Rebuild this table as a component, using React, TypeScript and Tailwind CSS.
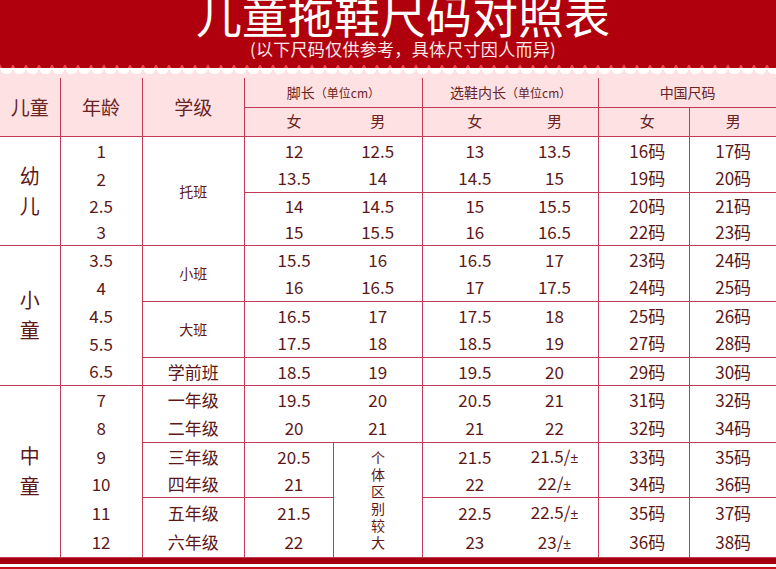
import React from "react"

const LINE = "border-[#c23a55]"

type Row = [string, string, string, string, string, string, string]

// age, 脚长女, 脚长男, 内长女, 内长男, 中国女, 中国男
const rows: Row[] = [
  ["1", "12", "12.5", "13", "13.5", "16码", "17码"],
  ["2", "13.5", "14", "14.5", "15", "19码", "20码"],
  ["2.5", "14", "14.5", "15", "15.5", "20码", "21码"],
  ["3", "15", "15.5", "16", "16.5", "22码", "23码"],
  ["3.5", "15.5", "16", "16.5", "17", "23码", "24码"],
  ["4", "16", "16.5", "17", "17.5", "24码", "25码"],
  ["4.5", "16.5", "17", "17.5", "18", "25码", "26码"],
  ["5.5", "17.5", "18", "18.5", "19", "27码", "28码"],
  ["6.5", "18.5", "19", "19.5", "20", "29码", "30码"],
  ["7", "19.5", "20", "20.5", "21", "31码", "32码"],
  ["8", "20", "21", "21", "22", "32码", "34码"],
  ["9", "20.5", "", "21.5", "21.5/", "33码", "35码"],
  ["10", "21", "", "22", "22/", "34码", "36码"],
  ["11", "21.5", "", "22.5", "22.5/", "35码", "37码"],
  ["12", "22", "", "23", "23/", "36码", "38码"],
]

const rowH = [
  "h-[28px]",
  "h-[28px]",
  "h-[27px]",
  "h-[26px]",
  "h-[28px]",
  "h-[28px]",
  "h-[28px]",
  "h-[28px]",
  "h-[28px]",
  "h-[28px]",
  "h-[29px]",
  "h-[28px]",
  "h-[27px]",
  "h-[30px]",
  "h-[30px]",
]

const groupEnds = [1, 3, 5, 7, 8, 10, 12, 14]

const kids: Record<number, { label: string; span: number }> = {
  0: { label: "幼儿", span: 4 },
  4: { label: "小童", span: 5 },
  9: { label: "中童", span: 6 },
}

const grades: Record<number, { label: string; span: number; small?: boolean; end: boolean }> = {
  0: { label: "托班", span: 4, small: true, end: true },
  4: { label: "小班", span: 2, small: true, end: true },
  6: { label: "大班", span: 2, small: true, end: true },
  8: { label: "学前班", span: 1, end: true },
  9: { label: "一年级", span: 1, end: false },
  10: { label: "二年级", span: 1, end: true },
  11: { label: "三年级", span: 1, end: false },
  12: { label: "四年级", span: 1, end: true },
  13: { label: "五年级", span: 1, end: false },
  14: { label: "六年级", span: 1, end: true },
}

const cell = (...c: (string | false)[]) =>
  ["p-0 text-center align-middle", LINE, ...c].filter(Boolean).join(" ")

export default function App() {
  return (
    <div className="h-[569px] w-[776px] overflow-hidden bg-white font-['Noto_Sans_CJK_SC','Noto_Sans',sans-serif]">
      {/* banner */}
      <div className="flex h-[65px] flex-col items-center overflow-hidden bg-[#b0000d] pl-[30px] text-white">
        <h1 className="-mt-[10px] text-[46px] leading-[46px]">儿童拖鞋尺码对照表</h1>
        <p className="mt-[3px] text-[17px] leading-[20px] tracking-[0.3px] text-[#fbe9ea]">
          (以下尺码仅供参考，具体尺寸因人而异)
        </p>
      </div>
      <div className="h-[3px] bg-[#e8434c] bg-[radial-gradient(circle_at_50%_0,#b0000d_5px,transparent_5.5px)] bg-[length:13px_3px]" />
      <div className="h-[10px] bg-[#fde1e3] bg-[radial-gradient(circle_at_50%_0,#ffffff_6px,transparent_6.5px)] bg-[length:13px_10px]" />

      <table className="w-[776px] table-fixed">
        <colgroup>
          <col className="w-[60px]" />
          <col className="w-[82px]" />
          <col className="w-[102px]" />
          <col className="w-[89px]" />
          <col className="w-[89px]" />
          <col className="w-[88px]" />
          <col className="w-[88px]" />
          <col className="w-[91px]" />
          <col className="w-[86px]" />
        </colgroup>
        <thead className="bg-[#fde1e3] font-normal text-[#6a2323]">
          <tr className="h-[29px]">
            <th rowSpan={2} className={cell("border-r border-b text-[19px] font-normal")}>
              儿童
            </th>
            <th rowSpan={2} className={cell("border-r border-b text-[19px] font-normal")}>
              年龄
            </th>
            <th rowSpan={2} className={cell("border-r border-b text-[19px] font-normal")}>
              学级
            </th>
            <th colSpan={2} className={cell("border-r border-b text-[14px] font-normal")}>
              脚长<span className="text-[12px]">（单位cm）</span>
            </th>
            <th colSpan={2} className={cell("border-r border-b text-[14px] font-normal")}>
              选鞋内长<span className="text-[12px]">（单位cm）</span>
            </th>
            <th colSpan={2} className={cell("border-b text-[14px] font-normal")}>
              中国尺码
            </th>
          </tr>
          <tr className="h-[29px] text-[15px]">
            <th className={cell("border-b pl-[10px] font-normal")}>女</th>
            <th className={cell("border-r border-b font-normal")}>男</th>
            <th className={cell("border-b pl-[16px] font-normal")}>女</th>
            <th className={cell("border-r border-b font-normal")}>男</th>
            <th className={cell("border-r border-b pl-[6px] font-normal")}>女</th>
            <th className={cell("border-b font-normal")}>男</th>
          </tr>
        </thead>
        <tbody className="text-[17px] leading-none text-[#5c1818]">
          {rows.map((r, i) => {
            const end = groupEnds.includes(i)
            const k = kids[i]
            const g = grades[i]
            return (
              <tr key={i} className={rowH[i]}>
                {k && (
                  <td rowSpan={k.span} className={cell("border-r border-b")}>
                    <div className="mx-auto w-[20px] text-[20px] leading-[30px]">{k.label}</div>
                  </td>
                )}
                <td className={cell("border-r", [3, 8, 14].includes(i) && "border-b")}>{r[0]}</td>
                {g && (
                  <td
                    rowSpan={g.span}
                    className={cell("border-r", g.end && "border-b", g.small ? "text-[14px]" : "text-[17px]")}
                  >
                    {g.label}
                  </td>
                )}
                <td className={cell("pl-[10px]", end && "border-b")}>{r[1]}</td>
                {i < 11 && <td className={cell("border-r", end && "border-b")}>{r[2]}</td>}
                {i === 11 && (
                  <td rowSpan={4} className={cell("border-l border-r border-b")}>
                    <div className="mx-auto w-[14px] text-[14px] leading-[17px]">个体区别较大</div>
                  </td>
                )}
                <td className={cell("pl-[16px]", end && "border-b")}>{r[3]}</td>
                <td className={cell("border-r", end && "border-b")}>
                  {r[4]}
                  {i > 10 && <span className="font-['Liberation_Sans'] text-[14px]">±</span>}
                </td>
                <td className={cell("border-r pl-[6px]", end && "border-b")}>{r[5]}</td>
                <td className={cell(end && "border-b")}>{r[6]}</td>
              </tr>
            )
          })}
        </tbody>
      </table>

      {/* bottom rule */}
      <div className="h-[6px] bg-[#a5000f]" />
      <div className="h-[3px] bg-white" />
      <div className="h-[2px] bg-[#c8101e]" />
    </div>
  )
}
